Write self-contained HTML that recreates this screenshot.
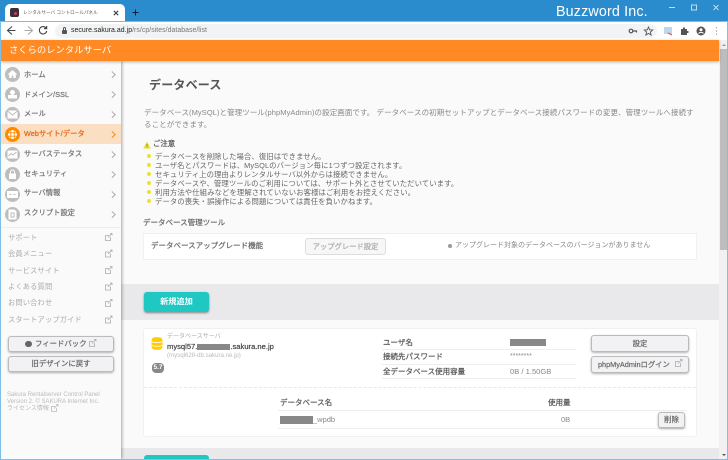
<!DOCTYPE html>
<html lang="ja"><head><meta charset="utf-8">
<style>
*{box-sizing:border-box;margin:0;padding:0}
html,body{width:728px;height:460px;overflow:hidden;background:#fafafa}
body{position:relative;font-family:"Liberation Sans","Noto Sans CJK JP",sans-serif;color:#666;filter:blur(.25px)}
.a{position:absolute;white-space:nowrap}
.t{position:absolute;white-space:nowrap;line-height:12px}
.md{-webkit-text-stroke:.2px currentColor}
.ic{position:absolute;left:5px;width:15px;height:15px;border-radius:50%;background:#bdbdbd}
.chev{position:absolute;left:110px;width:4.500px;height:4.500px;border-top:1px solid #aaa;border-right:1px solid #aaa;transform:rotate(45deg)}
.m{position:absolute;left:24px;font-size:7.200px;color:#777;line-height:12px;white-space:nowrap;letter-spacing:.1px;-webkit-text-stroke:.25px currentColor}
.s{position:absolute;left:8px;font-size:7.200px;color:#aaa;line-height:12px;white-space:nowrap;letter-spacing:.2px}
.btn{position:absolute;background:#f2f2f4;border:1px solid #bbb;border-radius:3px;box-shadow:0 1px 2px rgba(0,0,0,.3);text-align:center;font-size:7.400px;color:#666;white-space:nowrap;-webkit-text-stroke:.2px currentColor}
.ln{position:absolute;height:1px;background:#eee}
.li{position:absolute;left:155px;font-size:7.350px;color:#666;line-height:9px;white-space:nowrap;letter-spacing:.1px}
.dot{position:absolute;left:147px;width:4px;height:4px;border-radius:50%;background:#ece32a}
.lb{font-size:7.500px;color:#555;-webkit-text-stroke:.2px currentColor}
</style></head><body>

<!-- browser chrome -->
<div class="a" style="left:0;top:0;width:728px;height:21px;background:#2a8ccc"></div>
<div class="a" style="left:5px;top:4px;width:120px;height:18px;background:#fff;border-radius:5px 5px 0 0"></div>
<div class="a" style="left:10px;top:8px;width:9px;height:9px;background:#3a3038;border-radius:2px"></div>
<div class="a" style="left:14px;top:12px;width:3px;height:3px;background:#d8356a;border-radius:50%"></div>
<div class="t" style="left:23px;top:7px;font-size:4.600px;color:#555">レンタルサーバ コントロールパネル</div>
<svg class="a" style="left:113px;top:10px" width="6" height="6" viewBox="0 0 6 6"><path d="M.8.8l4.400 4.400M5.200.8L.8 5.200" stroke="#444" stroke-width="1.100"/></svg>
<svg class="a" style="left:132px;top:9px" width="7" height="7" viewBox="0 0 7 7"><path d="M3.500.5v6M.5 3.500h6" stroke="#123" stroke-width="1"/></svg>
<div class="t" style="left:556px;top:4px;font-size:14.300px;line-height:16px;color:#fff;letter-spacing:.15px">Buzzword Inc.</div>
<svg class="a" style="left:666px;top:2px" width="60" height="10" viewBox="0 0 60 10"><path d="M3 5.500h6" stroke="#bfdcf0"/><rect x="25.500" y="3" width="5" height="5" fill="none" stroke="#bfdcf0"/><path d="M47.500 3l5 5M52.500 3l-5 5" stroke="#bfdcf0"/></svg>

<div class="a" style="left:0;top:21px;width:728px;height:19px;background:#fff"></div>
<div class="a" style="left:0;top:21px;width:728px;height:1px;background:#7cbce4"></div>
<svg class="a" style="left:6px;top:25px" width="50" height="11" viewBox="0 0 50 11"><path d="M6 1.500L1.500 5.500l4.500 4M1.500 5.500h8" fill="none" stroke="#444" stroke-width="1.100"/><path d="M22 1.500l4.500 4-4.500 4M26.500 5.500h-8" fill="none" stroke="#aaa" stroke-width="1.100"/><path d="M40 3a3.700 3.700 0 1 0 .7 3M40.700 1v2.700H38" fill="none" stroke="#444" stroke-width="1.100"/></svg>
<div class="a" style="left:55px;top:24px;width:602px;height:14px;background:#f1f3f4;border-radius:7px"></div>
<div class="a" style="left:62px;top:30px;width:5px;height:4px;background:#555;border-radius:1px"></div>
<div class="a" style="left:63px;top:27px;width:3px;height:4px;border:1px solid #555;border-bottom:0;border-radius:2px 2px 0 0"></div>
<div class="t" style="left:71px;top:25px;font-size:6.900px;color:#222;letter-spacing:.05px">secure.sakura.ad.jp<span style="color:#777">/rs/cp/sites/database/list</span></div>
<svg class="a" style="left:628px;top:25px" width="100" height="12" viewBox="0 0 100 12"><circle cx="3" cy="6" r="1.800" fill="none" stroke="#555" stroke-width="1.200"/><path d="M5 6h3.500v1.500" fill="none" stroke="#555" stroke-width="1.200"/><path d="M20.500 2l1.200 2.800 3 .2-2.300 2 .7 3-2.600-1.600-2.600 1.600.7-3-2.300-2 3-.2z" fill="none" stroke="#555" stroke-width=".9"/><rect x="36" y="2" width="8" height="7" fill="#bcd8f0"/><path d="M40 8l4 2" stroke="#e05040" stroke-width="1"/><path d="M53 4h2V2.500h2V4h2v2h1.500v2H59v2h-6z" fill="#555"/><circle cx="73" cy="6" r="4.500" fill="#555"/><circle cx="73" cy="4.700" r="1.500" fill="#fff"/><path d="M70.500 8.500c1-1.500 4-1.500 5 0" stroke="#fff" fill="none"/><path d="M88.500 2.500v.8M88.500 5.600v.8M88.500 8.700v.8" stroke="#555" stroke-width="1.100"/></svg>

<!-- orange header -->
<div class="a" style="left:1px;top:40px;width:718px;height:21px;background:#ff8922;box-shadow:0 1px 3px rgba(0,0,0,.3);z-index:3"></div>
<div class="t" style="left:9px;top:44px;font-size:9.300px;color:#fff;z-index:4">さくらのレンタルサーバ</div>

<!-- scrollbar -->
<div class="a" style="left:719px;top:40px;width:8px;height:419px;background:#f1f1f1"></div>
<div class="a" style="left:720px;top:49px;width:7px;height:201px;background:#bdbdbd"></div>
<div class="a" style="left:722px;top:44px;border:2px solid transparent;border-top:0;border-bottom:2px solid #999"></div>
<div class="a" style="left:722px;top:454px;border:2px solid transparent;border-bottom:0;border-top:2px solid #555"></div>

<!-- sidebar -->
<div class="a" style="left:1px;top:61px;width:120px;height:398px;background:#fafafa;box-shadow:1px 0 3px rgba(0,0,0,.35);z-index:2"></div>
<div class="a" style="left:1px;top:124px;width:120px;height:20px;background:#fbdfc2;z-index:2"></div>
<div class="a" style="left:0;top:61px;width:121px;height:398px;z-index:3">
<div class="ic" style="top:6px"></div>
<svg class="a" style="left:7px;top:8px" width="11" height="10" viewBox="0 0 11 10"><path d="M5.500 1L.5 5.500h1.700V9h2.500V6.500h1.600V9h2.500V5.500h1.700z" fill="#fff"/></svg>
<div class="m" style="top:8px">ホーム</div><div class="chev" style="top:11px"></div>
<div class="ic" style="top:26px"></div>
<svg class="a" style="left:7px;top:28px" width="11" height="11" viewBox="0 0 11 11"><circle cx="5.500" cy="3.500" r="2.500" fill="#fff"/><rect x="1" y="6" width="9" height="3.500" fill="#fff"/></svg>
<div class="m" style="top:28px">ドメイン/SSL</div><div class="chev" style="top:31px"></div>
<div class="ic" style="top:46px"></div>
<svg class="a" style="left:7px;top:49px" width="11" height="9" viewBox="0 0 11 9"><rect x=".5" y=".5" width="10" height="8" fill="#fff"/><path d="M.5 1l5 4 5-4" fill="none" stroke="#bdbdbd"/></svg>
<div class="m" style="top:47px">メール</div><div class="chev" style="top:51px"></div>
<div class="ic" style="top:66px;background:#ff8a00"></div>
<svg class="a" style="left:7px;top:68px" width="11" height="11" viewBox="0 0 11 11"><circle cx="5.500" cy="5.500" r="4.500" fill="#fff"/><path d="M1 3.800h9M1 7.200h9M3.800 1v9M7.200 1v9" stroke="#ff8a00" stroke-width=".8"/></svg>
<div class="m" style="top:67px;color:#e8681a">Webサイト/データ</div><div class="chev" style="top:71px;border-color:#ff8a00"></div>
<div class="ic" style="top:86px"></div>
<svg class="a" style="left:7px;top:89px" width="11" height="9" viewBox="0 0 11 9"><rect x=".5" y=".5" width="10" height="8" fill="#fff"/><path d="M1.500 6L4 3.500l2 1.500 3.500-3" fill="none" stroke="#bdbdbd"/></svg>
<div class="m" style="top:87px">サーバステータス</div><div class="chev" style="top:91px"></div>
<div class="ic" style="top:106px"></div>
<svg class="a" style="left:8px;top:108px" width="9" height="11" viewBox="0 0 9 11"><rect x="1" y="4.500" width="7" height="5.500" fill="#fff"/><path d="M2.500 4.500V3a2 2 0 0 1 4 0v1.500" fill="none" stroke="#fff"/></svg>
<div class="m" style="top:107px">セキュリティ</div><div class="chev" style="top:111px"></div>
<div class="ic" style="top:126px"></div>
<svg class="a" style="left:7px;top:130px" width="11" height="7" viewBox="0 0 11 7"><rect width="11" height="7" fill="#fff"/><path d="M2.500 3.500h2M6.500 3.500h2" stroke="#bdbdbd"/></svg>
<div class="m" style="top:126px">サーバ情報</div><div class="chev" style="top:131px"></div>
<div class="ic" style="top:146px"></div>
<svg class="a" style="left:8px;top:148px" width="9" height="11" viewBox="0 0 9 11"><path d="M.5.500h6l2 2v8h-8z" fill="#fff"/><path d="M3 4h3v4H3z" fill="none" stroke="#bdbdbd"/></svg>
<div class="m" style="top:146px">スクリプト設定</div><div class="chev" style="top:151px"></div>
<div class="a" style="left:1px;top:166px;width:120px;height:1px;background:#eee"></div>

<div class="s" style="top:171px">サポート</div>
<div class="s" style="top:187px">会員メニュー</div>
<div class="s" style="top:204px">サービスサイト</div>
<div class="s" style="top:220px">よくある質問</div>
<div class="s" style="top:236px">お問い合わせ</div>
<div class="s" style="top:253px">スタートアップガイド</div>
<svg class="a" style="left:105px;top:172px" width="8" height="94" viewBox="0 0 8 94" fill="none" stroke="#aaa" stroke-width=".8"><path d="M5.500 4v3.500H.5v-5H4M3 4.500L7 .5M5 .5h2v2"/><path transform="translate(0 16.500)" d="M5.500 4v3.500H.5v-5H4M3 4.500L7 .5M5 .5h2v2"/><path transform="translate(0 33)" d="M5.500 4v3.500H.5v-5H4M3 4.500L7 .5M5 .5h2v2"/><path transform="translate(0 49.500)" d="M5.500 4v3.500H.5v-5H4M3 4.500L7 .5M5 .5h2v2"/><path transform="translate(0 66)" d="M5.500 4v3.500H.5v-5H4M3 4.500L7 .5M5 .5h2v2"/><path transform="translate(0 82.500)" d="M5.500 4v3.500H.5v-5H4M3 4.500L7 .5M5 .5h2v2"/></svg>

<div class="btn" style="left:8px;top:275px;width:106px;height:16px"></div>
<div class="a" style="left:25px;top:280px;width:7px;height:6px;background:#666;border-radius:3px"></div>
<div class="t" style="left:35px;top:277px;font-size:7.400px;color:#666;-webkit-text-stroke:.2px currentColor">フィードバック</div>
<svg class="a" style="left:89px;top:278px" width="8" height="8" viewBox="0 0 8 8" fill="none" stroke="#aaa" stroke-width=".8"><path d="M5.500 4v3.500H.5v-5H4M3 4.500L7 .5M5 .5h2v2"/></svg>
<div class="btn" style="left:8px;top:295px;width:106px;height:16px;line-height:14px">旧デザインに戻す</div>
<div class="t" style="left:7px;top:331px;font-size:6px;line-height:7px;color:#bbb">Sakura Rentalserver Control Panel<br>Version 2. © SAKURA Internet Inc.<br>ライセンス情報</div>
<svg class="a" style="left:51px;top:343px" width="8" height="8" viewBox="0 0 8 8" fill="none" stroke="#bbb" stroke-width=".8"><path d="M5.500 4v3.500H.5v-5H4M3 4.500L7 .5M5 .5h2v2"/></svg>
</div>

<!-- main -->
<div class="t" style="left:149px;top:78px;font-size:12px;line-height:14px;font-weight:bold;color:#555;letter-spacing:.2px">データベース</div>
<div class="t" style="left:144px;top:107px;font-size:7.500px;color:#888;letter-spacing:.07px">データベース(MySQL)と管理ツール(phpMyAdmin)の設定画面です。 データベースの初期セットアップとデータベース接続パスワードの変更、管理ツールへ接続す</div>
<div class="t" style="left:144px;top:119px;font-size:7.500px;color:#888;letter-spacing:.07px">ることができます。</div>

<svg class="a" style="left:143px;top:141px" width="8" height="8" viewBox="0 0 8 8"><path d="M4 .5l3.800 7H.2z" fill="#ece32a"/><path d="M4 3v2.500M4 6v.8" stroke="#664" stroke-width=".7"/></svg>
<div class="t md" style="left:153px;top:138px;font-size:7.400px;color:#555">ご注意</div>
<div class="dot" style="top:154px"></div><div class="li" style="top:152px">データベースを削除した場合、復旧はできません。</div>
<div class="dot" style="top:163px"></div><div class="li" style="top:161px">ユーザ名とパスワードは、MySQLのバージョン毎に1つずつ設定されます。</div>
<div class="dot" style="top:172px"></div><div class="li" style="top:170px">セキュリティ上の理由よりレンタルサーバ以外からは接続できません。</div>
<div class="dot" style="top:181px"></div><div class="li" style="top:179px">データベースや、管理ツールのご利用については、サポート外とさせていただいています。</div>
<div class="dot" style="top:190px"></div><div class="li" style="top:188px">利用方法や仕組みなどを理解されていないお客様はご利用をお控えください。</div>
<div class="dot" style="top:199px"></div><div class="li" style="top:197px">データの喪失・誤操作による問題については責任を負いかねます。</div>

<div class="t md" style="left:143px;top:217px;font-size:7.500px;color:#666">データベース管理ツール</div>
<div class="a" style="left:143px;top:233px;width:554px;height:27px;background:#fff;border:1px solid #f0f0f0"></div>
<div class="t md" style="left:151px;top:240px;font-size:7.500px;color:#666">データベースアップグレード機能</div>
<div class="a md" style="left:305px;top:238px;width:81px;height:17px;background:#f7f7f7;border:1px solid #ddd;border-radius:3px;text-align:center;font-size:7.300px;line-height:15px;color:#aaa">アップグレード設定</div>
<div class="a" style="left:448px;top:244px;width:4px;height:4px;background:#999;border-radius:50%"></div>
<div class="t" style="left:455px;top:240px;font-size:7px;color:#888">アップグレード対象のデータベースのバージョンがありません</div>

<div class="a" style="left:121px;top:284px;width:598px;height:36px;background:#e9e9eb"></div>
<div class="a" style="left:144px;top:292px;width:65px;height:20px;background:#20c8c4;border-radius:3px;box-shadow:0 1px 2px rgba(0,0,0,.45);color:#fff;font-size:8.200px;font-weight:bold;text-align:center;line-height:19px">新規追加</div>

<div class="a" style="left:143px;top:328px;width:554px;height:109px;background:#fff;border:1px solid #f0f0f0;border-radius:3px"></div>
<svg class="a" style="left:151px;top:337px" width="12" height="13" viewBox="0 0 12 13"><rect x=".5" y=".2" width="11" height="12.600" rx="3.500" fill="#ffcc00"/><path d="M.5 4.600c2.500 1.300 8.500 1.300 11 0M.5 8.300c2.500 1.300 8.500 1.300 11 0" fill="none" stroke="#fff" stroke-width=".8"/></svg>
<div class="t" style="left:167px;top:333px;font-size:6px;color:#aaa;line-height:9px">データベースサーバ</div>
<div class="t md" style="left:167px;top:342px;font-size:7.600px;color:#444;line-height:10px">mysql57.<span style="display:inline-block;width:33px;height:6px;background:#888;vertical-align:-.5px"></span>.sakura.ne.jp</div>
<div class="t" style="left:167px;top:351px;font-size:6.100px;color:#bbb;line-height:9px">(mysql628-db.sakura.ne.jp)</div>
<div class="a" style="left:152px;top:363px;width:12px;height:10px;background:#888;border-radius:4px;color:#fff;font-size:6.500px;font-weight:bold;text-align:center;line-height:10px">5.7</div>

<div class="t lb" style="left:383px;top:337px">ユーザ名</div>
<div class="t lb" style="left:383px;top:351px">接続先パスワード</div>
<div class="t lb" style="left:383px;top:366px">全データベース使用容量</div>
<div class="a" style="left:510px;top:339px;width:36px;height:7px;background:#888"></div>
<div class="t" style="left:510px;top:351px;font-size:7px;color:#888">********</div>
<div class="t" style="left:510px;top:366px;font-size:7.600px;color:#888">0B / 1.50GB</div>
<div class="ln" style="left:382px;top:349px;width:194px"></div>
<div class="ln" style="left:382px;top:364px;width:194px"></div>
<div class="ln" style="left:382px;top:378px;width:194px"></div>

<div class="btn" style="left:591px;top:335px;width:98px;height:17px;line-height:15px">設定</div>
<div class="btn" style="left:591px;top:356px;width:98px;height:17px;line-height:15px;text-align:left;padding-left:6px;font-size:7.300px">phpMyAdminログイン</div>
<svg class="a" style="left:675px;top:359px" width="8" height="8" viewBox="0 0 8 8" fill="none" stroke="#aaa" stroke-width=".8"><path d="M5.500 4v3.500H.5v-5H4M3 4.500L7 .5M5 .5h2v2"/></svg>

<div class="a" style="left:144px;top:387px;width:552px;height:0;border-top:1px dashed #e8e8e8"></div>
<div class="t lb" style="left:280px;top:397px">データベース名</div>
<div class="t lb" style="left:548px;top:397px">使用量</div>
<div class="ln" style="left:278px;top:410px;width:409px"></div>
<div class="ln" style="left:278px;top:428px;width:409px"></div>
<div class="a" style="left:280px;top:416px;width:33px;height:8px;background:#888"></div>
<div class="t" style="left:313px;top:414px;font-size:7.500px;color:#888">_wpdb</div>
<div class="t" style="left:561px;top:414px;font-size:7.500px;color:#888">0B</div>
<div class="btn" style="left:658px;top:412px;width:27px;height:16px;line-height:14px;font-size:7.500px">削除</div>

<div class="a" style="left:121px;top:448px;width:598px;height:11px;background:#e9e9eb"></div>
<div class="a" style="left:144px;top:455px;width:65px;height:4px;background:#20c8c4;border-radius:3px 3px 0 0"></div>

<!-- window frame -->
<div class="a" style="left:0;top:22px;width:1px;height:438px;background:#7cc0e8;z-index:5"></div>
<div class="a" style="left:727px;top:22px;width:1px;height:438px;background:#7cc0e8;z-index:5"></div>
<div class="a" style="left:0;top:459px;width:728px;height:1px;background:#7cc0e8;z-index:5"></div>
</body></html>
